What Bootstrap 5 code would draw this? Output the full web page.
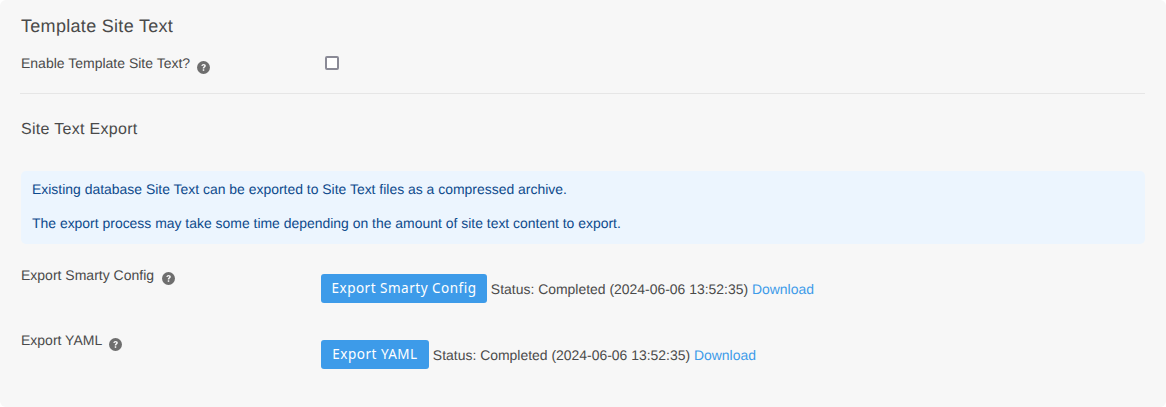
<!DOCTYPE html>
<html>
<head>
    <title>Site Text</title>
    <link href="https://cdn.jsdelivr.net/npm/bootstrap@5.3.0/dist/css/bootstrap.min.css" rel="stylesheet">
    <style>
        body { background: #fff; font-family: "Liberation Sans", Arial, sans-serif; font-size: 14px; color: #4a4a4a; text-rendering: geometricPrecision; }
        .panel-box { height: 407px; background: #f7f7f7; border-radius: 6px; padding: 14px 21px 0 21px; }
        .panel-title { font-size: 18px; line-height: 24px; letter-spacing: .3px; font-weight: 400; margin: 0 0 13px; color: #4a4a4a; }
        .sub-title { font-size: 16px; line-height: 22px; letter-spacing: .3px; font-weight: 400; margin: 0 0 30px; color: #4a4a4a; }
        .label-col { width: 300px; flex: none; line-height: 18px; }
        .label-col-top { padding-top: 3px; }
        .label-col-up { margin-top: -1px; }
        .help-icon { width: 13px; height: 13px; margin-left: 3px; vertical-align: -5px; }
        .help-icon-low { vertical-align: -6px; }
        .help-icon-wide { margin-left: 4px; }
        .check-box { width: 14px; height: 14px; border: 2px solid #8a8a96; border-radius: 2px; background: #fff; display: block; margin: 5px 0 0 4px; }
        .top-row { height: 42px; }
        .divider { border-top: 1px solid #e6e6e6; margin: 0 0 25px -1px; }
        .info-box { background: #ecf5fe; color: #0d4a8c; border-radius: 5px; padding: 8px 11px; height: 73px; line-height: 20px; margin-bottom: 22px; font-size: 13.95px; }
        .info-box p { margin: 0 0 14px; }
        .export-row { height: 66px; }
        .export-status { font-size: 13.95px; }
        .export-btn { background: #3d9be9; color: #fff; border: 0; border-radius: 3px; font-family: "Noto Sans", sans-serif; font-size: 13.5px; letter-spacing: .5px; padding: 0; height: 29px; line-height: 29px; vertical-align: 1px; }
        .export-btn:hover { background: #3d9be9; color: #fff; }
        .btn-wide { width: 166px; }
        .btn-short { width: 108px; }
        .dl-link { color: #3d9be9; text-decoration: none; }
    </style>
</head>
<body>
    <div class="panel-box">
        <h4 class="panel-title">Template Site Text</h4>
        <div class="d-flex top-row">
            <div class="label-col label-col-top">Enable Template Site Text?
                <svg class="help-icon help-icon-low" viewBox="0 0 14 14"><circle cx="7" cy="7" r="7" fill="#6e6e6e"/><path d="M4.7 5.4C4.8 4 5.8 3.2 7.1 3.2c1.4 0 2.4.8 2.4 2 0 1.6-1.7 1.6-1.7 2.8H6.2c0-1.9 1.6-1.9 1.6-2.8 0-.4-.3-.7-.8-.7-.5 0-.8.3-.9.9z" fill="#f7f7f7"/><rect x="6.2" y="8.9" width="1.6" height="1.7" fill="#f7f7f7"/></svg>
            </div>
            <div><span class="check-box"></span></div>
        </div>
        <div class="divider"></div>
        <h5 class="sub-title">Site Text Export</h5>
        <div class="info-box">
            <p>Existing database Site Text can be exported to Site Text files as a compressed archive.</p>
            <p>The export process may take some time depending on the amount of site text content to export.</p>
        </div>
        <div class="d-flex export-row">
            <div class="label-col">Export Smarty Config
                <svg class="help-icon help-icon-wide" viewBox="0 0 14 14"><circle cx="7" cy="7" r="7" fill="#6e6e6e"/><path d="M4.7 5.4C4.8 4 5.8 3.2 7.1 3.2c1.4 0 2.4.8 2.4 2 0 1.6-1.7 1.6-1.7 2.8H6.2c0-1.9 1.6-1.9 1.6-2.8 0-.4-.3-.7-.8-.7-.5 0-.8.3-.9.9z" fill="#f7f7f7"/><rect x="6.2" y="8.9" width="1.6" height="1.7" fill="#f7f7f7"/></svg>
            </div>
            <div class="pt-2 export-status"><button class="btn export-btn btn-wide">Export Smarty Config</button> Status: Completed (2024-06-06 13:52:35) <a class="dl-link" href="#">Download</a></div>
        </div>
        <div class="d-flex export-row">
            <div class="label-col label-col-up">Export YAML
                <svg class="help-icon help-icon-low" viewBox="0 0 14 14"><circle cx="7" cy="7" r="7" fill="#6e6e6e"/><path d="M4.7 5.4C4.8 4 5.8 3.2 7.1 3.2c1.4 0 2.4.8 2.4 2 0 1.6-1.7 1.6-1.7 2.8H6.2c0-1.9 1.6-1.9 1.6-2.8 0-.4-.3-.7-.8-.7-.5 0-.8.3-.9.9z" fill="#f7f7f7"/><rect x="6.2" y="8.9" width="1.6" height="1.7" fill="#f7f7f7"/></svg>
            </div>
            <div class="pt-2 export-status"><button class="btn export-btn btn-short">Export YAML</button> Status: Completed (2024-06-06 13:52:35) <a class="dl-link" href="#">Download</a></div>
        </div>
    </div>
    <script src="https://cdn.jsdelivr.net/npm/bootstrap@5.3.0/dist/js/bootstrap.bundle.min.js"></script>
</body>
</html>
